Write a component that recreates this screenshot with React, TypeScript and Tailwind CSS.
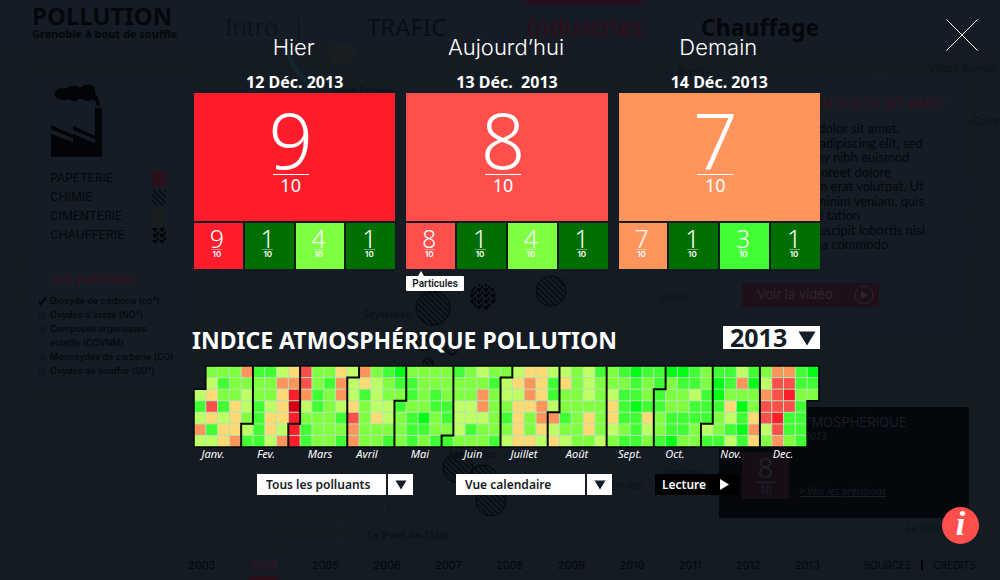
import React from "react";

type Tile = { score: number; color: string };
type Day = { title: string; date: string; score: number; color: string; tiles: Tile[]; hint?: string };

const DAYS: Day[] = [
  {
    title: "Hier",
    date: "12 Déc. 2013",
    score: 9,
    color: "bg-[#ff1d2b]",
    tiles: [
      { score: 9, color: "bg-[#ff1d2b]" },
      { score: 1, color: "bg-[#006e00]" },
      { score: 4, color: "bg-[#80ff40]" },
      { score: 1, color: "bg-[#006e00]" },
    ],
  },
  {
    title: "Aujourd’hui",
    date: "13 Déc.  2013",
    score: 8,
    color: "bg-[#ff4f4d]",
    tiles: [
      { score: 8, color: "bg-[#ff4f4d]" },
      { score: 1, color: "bg-[#006e00]" },
      { score: 4, color: "bg-[#80ff40]" },
      { score: 1, color: "bg-[#006e00]" },
    ],
    hint: "Particules",
  },
  {
    title: "Demain",
    date: "14 Déc. 2013",
    score: 7,
    color: "bg-[#ff955c]",
    tiles: [
      { score: 7, color: "bg-[#ff955c]" },
      { score: 1, color: "bg-[#006e00]" },
      { score: 3, color: "bg-[#40ff33]" },
      { score: 1, color: "bg-[#006e00]" },
    ],
  },
];

// One entry per weekday; each letter is the level of one week, spaces only separate the months.
const WEEKS = [
  ".gggo GGly rggyl ogGB gggg Gglg glyyl lglG g GBGG BBGg GGlG gooGB",
  ".lGgg ggoo rgGol ylgG Gggg gggG lyoyG yglg g gGgG gGGg BGoB lrrGG",
  "lyggl ggyR oGgol Glgg GgGg ggog lloyG gglg l GGgG gglG Bggg orRgg",
  "GrGyl GlyD lGgly gllG ggGG llog gyyol gggg y GBGG ggGG GyBg rrrG.",
  "lylyg GyyR gggGr gylg GBgG lllg Gygoo Ggyg y GGyg GGGG glGy rRGG.",
  "oGyyl GylR Ggggo gggg GGgg lGgg gygyl ggyg l gGlg GGgl gGBo lrGG.",
  "llyoG GloR GggGo ggGg GgGG gggG lyyly lggl g GGgG BggG GlGy gogG.",
].map((row) => row.replaceAll(" ", ""));

const LEVELS: Record<string, string> = {
  B: "#00ff14",
  G: "#40ff33",
  g: "#80ff40",
  l: "#bfff66",
  y: "#ffd973",
  o: "#ff955c",
  r: "#ff4f4d",
  R: "#ff1d2b",
  D: "#d10014",
};

const MONTHS: [string, number][] = [
  ["Janv.", 19],
  ["Fev.", 72],
  ["Mars", 126],
  ["Avril", 173],
  ["Mai", 226],
  ["Juin", 279],
  ["Juillet", 330],
  ["Août", 383],
  ["Sept.", 436],
  ["Oct.", 481],
  ["Nov.", 537],
  ["Dec.", 589],
];

// [week before which the month starts on the upper rows, on the lower rows, row of the step]
const BREAKS: [number, number, number][] = [
  [5, 4, 5],
  [9, 8, 5],
  [14, 13, 1],
  [18, 17, 3],
  [22, 21, 6],
  [27, 26, 1],
  [31, 30, 4],
  [35, 35, 4],
  [40, 39, 2],
  [44, 43, 5],
  [48, 48, 4],
];

const CW = 11.79;
const CH = 11.57;
const OUTLINE = `M0 ${2 * CH + 1}H${CW}V1H${53 * CW}V${3 * CH + 1}H${52 * CW}V${7 * CH + 1}H0Z`;

function YearChart() {
  return (
    <svg viewBox="0 0 626 96" className="block w-full overflow-visible" role="img" aria-label="Calendrier 2013">
      <path d={OUTLINE} fill="#b4e4b0" />
      {WEEKS.map((row, r) =>
        row.split("").map((c, w) =>
          c === "." ? null : (
            <rect key={`${r}-${w}`} x={0.5 + w * CW} y={1.5 + r * CH} width={CW - 1} height={CH - 1} fill={LEVELS[c]} />
          ),
        ),
      )}
      <g fill="none" stroke="#05090a" strokeWidth="2">
        <path d={OUTLINE} strokeWidth="1.5" />
        {BREAKS.map(([a, b, s]) => (
          <path key={a} d={`M${a * CW} 1V${s * CH + 1}H${b * CW}V${7 * CH + 1}`} />
        ))}
      </g>
      <g fill="#ffffff" fontSize="11" fontStyle="italic" textAnchor="middle" fontFamily="'Noto Sans', sans-serif">
        {MONTHS.map(([m, x]) => (
          <text key={m} x={x} y="93">
            {m}
          </text>
        ))}
      </g>
    </svg>
  );
}

function MapBackdrop() {
  return (
    <svg
      viewBox="0 0 1000 580"
      preserveAspectRatio="xMidYMid slice"
      className="absolute inset-0 h-full w-full"
      aria-hidden="true"
    >
      <defs>
        <pattern id="hatch" width="4" height="4" patternUnits="userSpaceOnUse" patternTransform="rotate(-45)">
          <rect width="1.4" height="4" fill="#05080d" />
        </pattern>
        <pattern id="tri" width="7" height="6" patternUnits="userSpaceOnUse">
          <path d="M0 0H6L3 5ZM4 6L7 2V6Z" fill="#020407" />
        </pattern>
      </defs>
      <g fill="none" stroke="#171f29" strokeWidth="1">
        <path d="M222 45Q222 62 240 76T300 150" />
        <path d="M0 180Q40 230 25 300T30 420" />
        <path d="M470 270Q540 260 580 280T650 290L700 320" />
        <path d="M640 300Q600 340 560 400T470 540" />
        <path d="M980 150Q965 220 980 280" />
      </g>
      <g fill="none" stroke="#11262d" strokeWidth="4">
        <path d="M284 45Q290 65 306 82" />
        <path d="M866 75Q875 70 888 76" strokeWidth="1" />
        <path d="M380 450Q383 500 388 540" strokeWidth="1" />
      </g>
      <circle cx="342" cy="52" r="14" fill="#191e21" />
      <g fill="url(#hatch)" stroke="#05080d" strokeWidth="1">
        <circle cx="433" cy="308" r="17" />
        <circle cx="551" cy="291" r="15" />
        <circle cx="692" cy="-3" r="15" />
        <circle cx="424" cy="343" r="8" />
        <circle cx="452" cy="349" r="6" />
        <circle cx="428" cy="363" r="5" />
        <circle cx="458" cy="468" r="15" />
        <circle cx="483" cy="480" r="15" />
        <circle cx="491" cy="501" r="15" />
      </g>
      <circle cx="483" cy="297" r="13" fill="url(#tri)" />
      <g fill="#0c1219" fontSize="10" fontFamily="'Noto Sans', sans-serif">
        <text x="331" y="95" fontWeight="bold">Saint-Égrève</text>
        <text x="363" y="318" fontWeight="bold">Seyssinet-</text>
        <text x="448" y="458" fontWeight="bold">Échirolles</text>
        <text x="368" y="539" fontWeight="bold">Le Pont-de-Claix</text>
        <text x="678" y="75">Byers</text>
        <text x="658" y="301">Gières</text>
        <text x="929" y="72">Villard-Bonnot</text>
        <text x="965" y="125">a Comt</text>
        <text x="664" y="476">Herbeys</text>
        <text x="906" y="532">Le Reco</text>
        <text x="611" y="489">rnolles</text>
      </g>
      <g fill="#171e28" fontSize="11" fontWeight="bold" fontFamily="'Noto Sans', sans-serif">
        <text x="266" y="526">Dioxyde de soufre</text>
        <text x="266" y="543">Dioxyde d’azote</text>
        <text x="266" y="562">Ozone</text>
      </g>
    </svg>
  );
}

function Factory() {
  return (
    <svg viewBox="150 249 162 228" className="h-[76px] w-[54px]" fill="#020408" aria-hidden="true">
      <path d="M153 375L219 404V378L285 407V323H306V470H153Z" />
      <path d="M153 388L219 415V427L153 401ZM219 390L285 418V430L219 402Z" fill="#151c26" />
      <path d="M164 282C164 268 178 262 200 266C210 255 230 255 240 264C248 252 268 252 280 258C286 264 286 272 285 282C294 290 299 300 299 317H290C288 304 284 299 274 299C264 305 250 303 240 295C230 306 214 306 206 298C190 304 164 300 164 282Z" />
    </svg>
  );
}

const SECTORS: [string, string][] = [
  ["PAPETERIE", "#2a101b"],
  ["CHIMIE", "hatch"],
  ["CIMENTERIE", "#181d1e"],
  ["CHAUFFERIE", "tri"],
];

const POLLUTANTS = [
  "Dioxyde de carbone (co²)",
  "Oxydes d’azote (NO²)",
  "Composés organiques volatils (COVNM)",
  "Monoxydes de carbone (CO)",
  "Oxydes de souffre (SO²)",
];

const YEARS = [2003, 2004, 2005, 2006, 2007, 2008, 2009, 2010, 2011, 2012, 2013];

const LOREM = [
  "Lorem ipsum dolor sit amet,",
  "consectetuer adipiscing elit, sed",
  "diam nonummy nibh euismod",
  "tincidunt ut laoreet dolore",
  "magna aliquam erat volutpat. Ut",
  "wisi enim ad minim veniam, quis",
  "nostrud exerci tation",
  "ullamcorper suscipit lobortis nisl",
  "ut aliquip ex ea commodo",
];

function Backdrop() {
  return (
    <div className="relative flex min-h-screen flex-col font-['Inter',sans-serif] text-[#04070b]" inert>
      <MapBackdrop />
      <header className="relative flex h-[45px] items-start bg-[#151c26] font-['Noto_Sans',sans-serif]">
        <div className="w-[194px] pt-[3px] pl-[32px] whitespace-nowrap">
          <p className="text-[24px] leading-[25px] font-bold">POLLUTION</p>
          <p className="text-[11px] leading-[11px] font-bold">Grenoble à bout de souffle</p>
        </div>
        <nav className="flex h-full items-start text-[23px] leading-[54px] whitespace-nowrap">
          <a href="#intro" className="w-[71px] pl-[31px] text-[24px] font-light text-[#0a1017]">Intro</a>
          <span className="w-[102px] pl-[28px] text-[20px] font-light text-[#0a1017]">|</span>
          <a href="#trafic" className="w-[159px] text-[24px] text-[#090e15]">TRAFIC</a>
          <a href="#industries" className="mr-[59px] h-[4px] w-[116px] bg-[#260f1a] font-bold text-[#2a111c]">Industries</a>
          <a href="#chauffage" className="font-bold">Chauffage</a>
        </nav>
      </header>

      <div className="relative flex flex-1 items-start justify-between px-[31px] pt-[31px]">
        <aside className="w-[163px] bg-[#151c26] pt-[7px] pb-[14px] pl-[19px]">
          <Factory />
          <ul className="mt-[10px] flex flex-col gap-[1px] text-[12px] leading-[18px]">
            {SECTORS.map(([name, fill]) => (
              <li key={name} className="flex items-center justify-between pr-[28px]">
                {name}
                <svg viewBox="0 0 14 15" className="h-[15px] w-[14px]" aria-hidden="true">
                  <rect width="14" height="15" fill={fill.startsWith("#") ? fill : `url(#${fill})`} />
                </svg>
              </li>
            ))}
          </ul>
          <h2 className="mt-[24px] pl-[3px] font-['Noto_Sans',sans-serif] text-[13px] leading-[20px] font-medium text-[#35121c]">
            Les polluants
          </h2>
          <ul className="mt-[6px] -ml-[12px] font-['Inter',sans-serif] text-[9px] leading-[14px] font-medium">
            {POLLUTANTS.map((p, i) => (
              <li key={p} className="flex gap-[3px]">
                <svg viewBox="0 0 9 14" className="h-[14px] w-[9px] shrink-0" aria-hidden="true">
                  {i === 0 ? (
                    <path d="M1 7L3 10L8 3" fill="none" stroke="#04070b" strokeWidth="2" />
                  ) : (
                    <rect x="1" y="4" width="7" height="7" fill="#111720" />
                  )}
                </svg>
                <span className={i === 2 ? "w-[110px]" : "whitespace-nowrap"}>{p}</span>
              </li>
            ))}
          </ul>
        </aside>

        <div className="flex w-[250px] flex-col gap-[75px]">
          <section className="bg-[#151c26] pt-[17px] pb-[25px] pl-[23px] whitespace-nowrap">
            <h2 className="text-[13px] leading-[20px] text-[#35121c]">LOREM IPSUM DOLOR SIT AMET</h2>
            <div className="mt-[8px] font-['Lato',sans-serif] text-[13px] leading-[14px]">
              {LOREM.map((l) => (
                <p key={l} className="odd:pb-px">{l}</p>
              ))}
            </div>
            <button className="mt-[31px] flex h-[24px] w-[137px] items-center justify-between bg-[#1e0f19] pr-[5px] pl-[15px] text-[13px] text-[#2c2832]">
              Voir la vidéo
              <svg viewBox="0 0 20 20" className="h-[20px] w-[20px]" aria-hidden="true">
                <circle cx="10" cy="10" r="9" fill="none" stroke="#2c2832" />
                <path d="M7 6.500L14 10L7 13.500Z" fill="#2c2832" />
              </svg>
            </button>
          </section>
          <section className="h-[111px] bg-[#04070c] pt-[5px] pl-[23px] whitespace-nowrap text-[#1a1e25]">
            <h2 className="pl-[6px] text-[13px] leading-[20px]">INDICE ATMOSPHÉRIQUE</h2>
            <p className="pl-[2px] font-['Noto_Sans',sans-serif] text-[10px] leading-[8px] italic">13 Décembre 2013</p>
            <div className="mt-[12px] flex items-end gap-[10px]">
              <div className="flex h-[47px] w-[47px] flex-col items-center bg-[#170d15] font-['Noto_Sans',sans-serif] text-[#1b2733]">
                <span className="w-[20px] border-b border-[#1b2733] text-center text-[28px] leading-[30px] font-light">8</span>
                <span className="text-[10px] leading-[14px]">10</span>
              </div>
              <a href="#previsions" className="font-['Noto_Sans',sans-serif] text-[10px] italic underline">&gt; Voir les prévisions</a>
            </div>
          </section>
        </div>
      </div>

      <footer className="relative flex h-[30px] items-center text-[11px]">
        <div className="flex flex-1 justify-between pr-[44px] pl-[188px]">
          {YEARS.map((y) => (
            <a
              key={y}
              href={`#${y}`}
              className={
                y === 2004
                  ? "relative text-[#3d131e] after:absolute after:top-[19px] after:left-[-1px] after:h-[5px] after:w-[29px] after:bg-[#280f1a]"
                  : ""
              }
            >
              {y}
            </a>
          ))}
        </div>
        <div className="flex items-center gap-[10px] pr-[24px] text-[10px]">
          <a href="#sources">SOURCES</a>
          <span className="h-[10px] w-[2px] bg-[#020407]" />
          <a href="#credits">CRÉDITS</a>
        </div>
      </footer>
    </div>
  );
}

function DayCard({ day }: { day: Day }) {
  return (
    <article className="flex min-w-0 flex-1 flex-col">
      <h2 className="pr-[2px] text-center font-['Inter',sans-serif] text-[22px] leading-[30px] font-light">{day.title}</h2>
      <p className="mt-[10px] mb-px text-center text-[16px] leading-[20px] font-bold whitespace-pre">{day.date}</p>
      <div className={`flex h-[128px] flex-col items-center pt-[12px] pr-[8px] ${day.color}`}>
        <span className="flex w-[36px] justify-center border-b border-white text-[78px] leading-[69px] font-light">
          {day.score}
        </span>
        <span className="text-[18px] leading-[20px]">10</span>
      </div>
      <ul className="mt-[2px] flex gap-[2px]">
        {day.tiles.map((t, i) => (
          <li key={i} className={`relative flex h-[46px] flex-1 flex-col items-center pt-[4px] pr-[3px] ${t.color}`}>
            <span className="flex w-[11px] justify-center border-b border-white/40 text-[25px] leading-[22px] font-light">
              {t.score}
            </span>
            <span className="font-['Inter',sans-serif] text-[8px] leading-[9px] font-semibold">10</span>
            {i === 0 && day.hint && (
              <span
                role="tooltip"
                className="absolute top-[53px] left-0 rounded-[1px] bg-white px-[6px] font-['Roboto',sans-serif] text-[10px] leading-[15px] font-semibold text-[#151c26] after:absolute after:-top-[5px] after:left-[12px] after:border-x-[3px] after:border-b-[5px] after:border-x-transparent after:border-b-white"
              >
                {day.hint}
              </span>
            )}
          </li>
        ))}
      </ul>
    </article>
  );
}

function Picker({ label, options }: { label: string; options: string[] }) {
  return (
    <div className="relative flex h-[21px] w-[156px]">
      <select
        aria-label={label}
        className="w-full appearance-none bg-white pr-[30px] pl-[9px] text-[12px] leading-[21px] font-semibold text-[#151c26]"
      >
        {options.map((o) => (
          <option key={o}>{o}</option>
        ))}
      </select>
      <span className="pointer-events-none absolute inset-y-0 right-0 flex w-[27px] items-center justify-center border-l-2 border-[#151c26]">
        <svg viewBox="0 0 12 10" className="h-[10px] w-[12px]" aria-hidden="true">
          <path d="M0.500 0.500H11.500L6 9.500Z" fill="#151c26" />
        </svg>
      </span>
    </div>
  );
}

export default function App() {
  return (
    <div className="relative min-h-screen overflow-hidden bg-[#141b23] font-['Noto_Sans',sans-serif]">
      <Backdrop />
      <div role="dialog" aria-label="Indice atmosphérique" className="absolute inset-0 text-white">
        <div className="mx-auto flex w-full max-w-[640px] flex-col pt-[32px] pl-[14px]">
          <section className="flex gap-[11px]">
            {DAYS.map((d) => (
              <DayCard key={d.title} day={d} />
            ))}
          </section>

          <div className="mt-[57px] flex items-start justify-between">
            <h1 className="-ml-[2px] text-[23px] leading-[28px] font-bold whitespace-nowrap">INDICE ATMOSPHÉRIQUE POLLUTION</h1>
            <div className="relative flex h-[23px] w-[97px]">
              <select
                aria-label="Année"
                className="w-full appearance-none bg-white pl-[7px] text-[25px] leading-[23px] font-bold text-[#151c26]"
              >
                <option>2013</option>
                <option>2012</option>
              </select>
              <svg viewBox="0 0 18 15" className="pointer-events-none absolute top-[5px] right-[4px] h-[15px] w-[18px]" aria-hidden="true">
                <path d="M0.500 0.500H17.500L9 14.500Z" fill="#151c26" />
              </svg>
            </div>
          </div>

          <div className="mt-[11px]">
            <YearChart />
          </div>

          <div className="mt-[13px] flex items-start justify-between pr-[81px] pl-[63px]">
            <Picker label="Polluant" options={["Tous les polluants", "Dioxyde de soufre", "Dioxyde d’azote", "Ozone"]} />
            <Picker label="Vue" options={["Vue calendaire"]} />
            <button className="flex h-[21px] w-[84px] items-center justify-between bg-black pr-[10px] pl-[7px] text-[12px] font-semibold">
              Lecture
              <svg viewBox="0 0 10 12" className="h-[11px] w-[9px]" aria-hidden="true">
                <path d="M0 0L10 6L0 12Z" fill="#fff" />
              </svg>
            </button>
          </div>
        </div>

        <button aria-label="Fermer" className="absolute top-[19px] right-[22px] h-[32px] w-[32px]">
          <svg viewBox="0 0 32 32" className="h-full w-full" aria-hidden="true">
            <path d="M0.500 0.500L31.500 31.500M31.500 0.500L0.500 31.500" stroke="#fff" strokeWidth="1" />
          </svg>
        </button>
        <button
          aria-label="Informations"
          className="absolute right-[21px] bottom-[36px] flex h-[37px] w-[37px] items-center justify-center rounded-full bg-[#ff4f4d] pb-[3px] font-['Liberation_Serif',serif] text-[34px] leading-[34px] font-bold italic"
        >
          i
        </button>
      </div>
    </div>
  );
}
